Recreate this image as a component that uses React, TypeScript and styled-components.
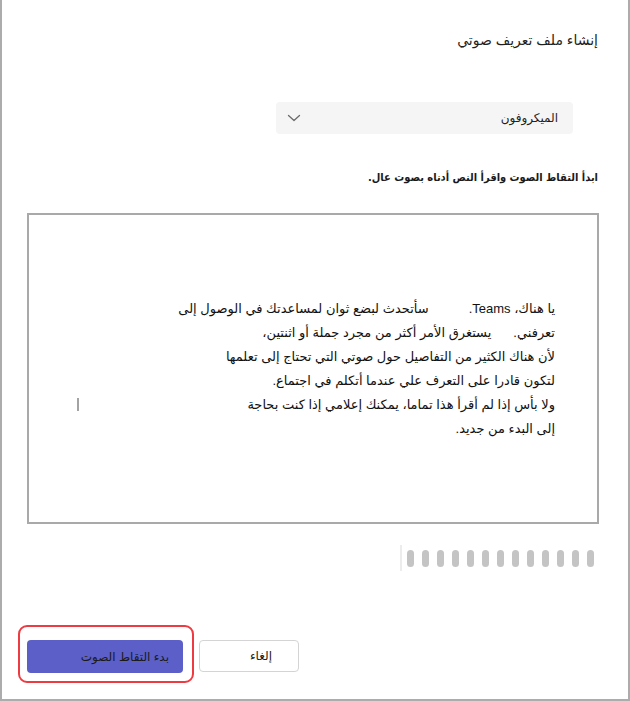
import styled, { createGlobalStyle } from 'styled-components';

const GlobalStyle = createGlobalStyle`
  html, body {
    margin: 0;
    padding: 0;
    background: #ffffff;
  }
  body {
    font-family: "Liberation Sans", "DejaVu Sans", sans-serif;
  }
`;

const Dialog = styled.div`
  direction: rtl;
  box-sizing: border-box;
  width: 630px;
  height: 701px;
  border: 2px solid #acacac;
  border-top: none;
  padding: 30px 30px 16px 25px;
  display: flex;
  flex-direction: column;
  background: #ffffff;
  color: #242424;
`;

const Title = styled.h2`
  margin: 0;
  font-size: 14px;
  line-height: 20px;
  font-weight: normal;
  color: #1f1f1f;
`;

const Select = styled.div`
  align-self: flex-start;
  box-sizing: border-box;
  width: 297px;
  height: 32px;
  margin: 52px 25px 0 0;
  padding: 0 15px 0 10px;
  display: flex;
  align-items: center;
  justify-content: space-between;
  background: #f5f5f5;
  border-radius: 4px;
  font-size: 12px;
  color: #1f1f1f;
`;

const Chevron = styled.svg`
  width: 16px;
  height: 16px;
  color: #6b6b6b;
`;

const Hint = styled.p`
  margin: 35px 0 0;
  font-family: "DejaVu Sans Condensed", "DejaVu Sans", sans-serif;
  font-stretch: condensed;
  font-size: 11px;
  line-height: 18px;
  font-weight: bold;
  color: #1a1a1a;
`;

const Script = styled.div`
  box-sizing: border-box;
  height: 311px;
  margin: 26px -1px 0 0;
  padding: 0 42px 0 20px;
  border: 2px solid #a9a9a9;
  display: flex;
  flex-direction: column;
  justify-content: center;
  font-size: 13px;
  line-height: 24px;
  color: #111111;
`;

const Line = styled.div`
  display: flex;
  align-items: center;
  white-space: nowrap;
`;

const Gap = styled.span<{ $w: number }>`
  display: inline-block;
  width: ${(p) => p.$w}px;
`;

const Caret = styled.span`
  width: 2px;
  height: 13px;
  margin: 0 auto 0 28px;
  background: #a3a3a3;
`;

const Meter = styled.div`
  display: flex;
  align-items: center;
  gap: 8px;
  height: 26px;
  margin: 21px 4px 0 0;
`;

const Pill = styled.span`
  width: 7px;
  height: 17px;
  border-radius: 4px;
  background: #c4c4c4;
`;

const Rule = styled.span`
  width: 2px;
  height: 26px;
  margin-right: -3px;
  background: #ececec;
`;

const Footer = styled.div`
  margin-top: auto;
  display: flex;
  justify-content: flex-end;
  align-items: flex-start;
  gap: 5px;
`;

const Focus = styled.div`
  margin-left: -9px;
  padding: 13px 9px 8px 7px;
  border: 2px solid #ee3b41;
  border-radius: 9px;
`;

const Button = styled.button<{ $primary?: boolean; $inset: number }>`
  box-sizing: border-box;
  display: flex;
  align-items: center;
  width: ${(p) => (p.$primary ? 156 : 100)}px;
  height: ${(p) => (p.$primary ? 33 : 32)}px;
  margin-top: ${(p) => (p.$primary ? 0 : 15)}px;
  padding: 0 ${(p) => p.$inset}px 0 0;
  border: ${(p) => (p.$primary ? 'none' : '1px solid #d4d4d4')};
  border-radius: 4px;
  background: ${(p) => (p.$primary ? '#5b5fc7' : '#ffffff')};
  color: #1a1a1a;
  font-family: inherit;
  font-size: 12px;
  direction: rtl;
`;

export default function App() {
  return (
    <>
      <GlobalStyle />
      <Dialog>
        <Title>إنشاء ملف تعريف صوتي</Title>
        <Select>
          <span>الميكروفون</span>
          <Chevron viewBox="0 0 16 16" fill="none">
            <path d="M2.5 5.5 8 10.5l5.5-5" stroke="currentColor" strokeWidth="1.3" strokeLinecap="round" strokeLinejoin="round" />
          </Chevron>
        </Select>
        <Hint>ابدأ التقاط الصوت واقرأ النص أدناه بصوت عال.</Hint>
        <Script>
          <Line>
            <span>
              يا هناك، Teams.<Gap $w={40} />سأتحدث لبضع ثوان لمساعدتك في الوصول إلى
            </span>
          </Line>
          <Line>
            <span>
              تعرفني.<Gap $w={22} />يستغرق الأمر أكثر من مجرد جملة أو اثنتين،
            </span>
          </Line>
          <Line>لأن هناك الكثير من التفاصيل حول صوتي التي تحتاج إلى تعلمها</Line>
          <Line>لتكون قادرا على التعرف علي عندما أتكلم في اجتماع.</Line>
          <Line>
            <span>ولا بأس إذا لم أقرأ هذا تماما، يمكنك إعلامي إذا كنت بحاجة</span>
            <Caret />
          </Line>
          <Line>إلى البدء من جديد.</Line>
        </Script>
        <Meter>
          {Array.from({ length: 13 }, (_, i) => (
            <Pill key={i} />
          ))}
          <Rule />
        </Meter>
        <Footer>
          <Button $inset={26}>إلغاء</Button>
          <Focus>
            <Button $primary $inset={14}>بدء التقاط الصوت</Button>
          </Focus>
        </Footer>
      </Dialog>
    </>
  );
}
